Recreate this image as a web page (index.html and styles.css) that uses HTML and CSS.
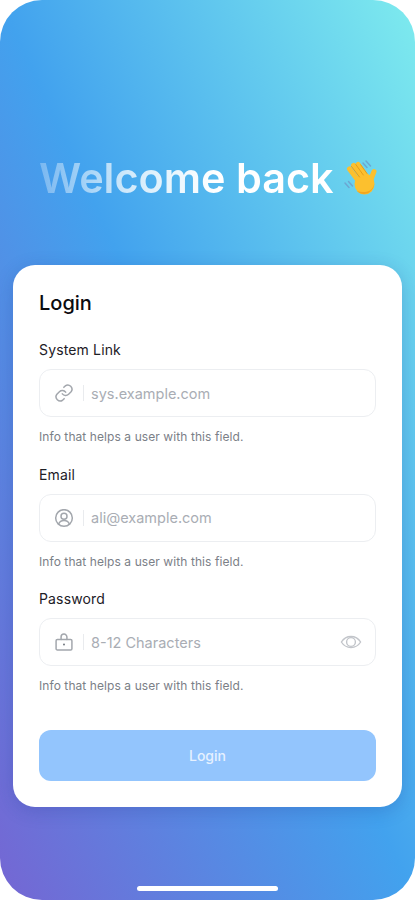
FILE: index.html
```html
<!doctype html>
<html lang="en">
    <head>
        <meta charset="UTF-8" />
        <meta name="viewport" content="width=device-width, initial-scale=1.0" />
        <title>Login</title>
        <link rel="stylesheet" href="styles.css">
    </head>
    <body>
        <div class="screen">
            <div class="welcome">
                <h1>Welcome back</h1>
                <!-- waving hand -->
                <svg class="wave" width="36" height="36" viewBox="0 0 36 36">
                    <g fill="none" stroke="#6d9ccb" stroke-width="1.500" stroke-linecap="round" opacity="0.8">
                        <path d="M20 3l4 4.500" />
                        <path d="M23 1l4.500 5" />
                        <path d="M2 23l4 4.500" />
                        <path d="M5.500 21.500l4 4.500" />
                    </g>
                    <g fill="none" stroke="#fcc02e" stroke-width="5" stroke-linecap="round">
                        <path d="M6.500 9l9 12" />
                        <path d="M10.500 5.500l9 12" />
                        <path d="M15 4.500l8.500 12" />
                        <path d="M31 11.500l-3.500 9" />
                    </g>
                    <ellipse cx="21.500" cy="24" rx="10" ry="10.500" fill="#fcc02e" />
                    <path fill="#f2a51f" d="M14 31c3 3 8 4 12 1.500 3-2 5-5 5.500-9-1 4-3.500 7-7 8-4 1-7.500 .5-10.500-.5z" />
                    <g fill="none" stroke="#dd9416" stroke-width=".8" stroke-linecap="round">
                        <path d="M8.500 6.500l8 10.500" />
                        <path d="M12.800 4.500l7.500 10.500" />
                        <path d="M17.700 4.800l6.300 8.700" />
                    </g>
                </svg>
            </div>

            <form class="card">
                <h2>Login</h2>

                <div class="field">
                    <label for="systemLink">System Link</label>
                    <div class="input-box">
                        <svg class="icon" width="20" height="20" viewBox="0 0 24 24">
                            <path d="M10 13a5 5 0 0 0 7.500.5l3-3a5 5 0 0 0-7-7l-1.700 1.700" />
                            <path d="M14 11a5 5 0 0 0-7.500-.5l-3 3a5 5 0 0 0 7 7l1.700-1.700" />
                        </svg>
                        <span class="divider"></span>
                        <input type="text" id="systemLink" placeholder="sys.example.com" />
                    </div>
                    <p class="help">Info that helps a user with this field.</p>
                </div>

                <div class="field">
                    <label for="email">Email</label>
                    <div class="input-box">
                        <svg class="icon" width="20" height="20" viewBox="0 0 24 24">
                            <circle cx="12" cy="12" r="10" />
                            <circle cx="12" cy="10" r="3.600" />
                            <path d="M5.500 19.500c1-3 3.500-4.500 6.500-4.500s5.500 1.500 6.500 4.500" />
                        </svg>
                        <span class="divider"></span>
                        <input type="text" id="email" placeholder="ali@example.com" />
                    </div>
                    <p class="help">Info that helps a user with this field.</p>
                </div>

                <div class="field">
                    <label for="password">Password</label>
                    <div class="input-box">
                        <svg class="icon" width="20" height="20" viewBox="0 0 24 24">
                            <rect x="2.500" y="9" width="19" height="12.500" rx="1.500" />
                            <path d="M8.500 9V6a3.500 3.500 0 0 1 7 0v3" />
                            <circle class="dot" cx="12" cy="15" r="1.300" />
                        </svg>
                        <span class="divider"></span>
                        <input type="password" id="password" placeholder="8-12 Characters" />
                        <svg class="icon eye" width="22" height="22" viewBox="0 0 24 24">
                            <path d="M1.500 12C4 8 7.500 6 12 6s8 2 10.500 6c-2.500 4-6 6-10.500 6s-8-2-10.500-6z" />
                            <circle cx="12" cy="12" r="4.800" />
                        </svg>
                    </div>
                    <p class="help">Info that helps a user with this field.</p>
                </div>

                <button type="button" class="login-btn">Login</button>
            </form>

            <div class="home-bar"></div>
        </div>
    </body>
</html>
```

FILE: styles.css
```css
* {
    box-sizing: border-box;
}
body {
    margin: 0;
    background-color: #fff;
    font-family: Inter, "Liberation Sans", sans-serif;
}
.screen {
    width: 415px;
    height: 900px;
    padding: 155px 13px 0;
    border-radius: 42px;
    overflow: hidden;
    background: linear-gradient(to top right, #7566d3 0%, #42a2ee 50%, #7eebee 100%);
}
.welcome {
    display: flex;
    align-items: center;
    gap: 9.5px;
    height: 46px;
    padding-left: 26px;
    margin-bottom: 64px;
}
.welcome h1 {
    margin: 0;
    font-size: 41.4px;
    line-height: 46px;
    font-weight: 600;
    white-space: nowrap;
    color: transparent;
    background: linear-gradient(to right, rgba(255, 255, 255, 0.28) 0%, rgba(255, 255, 255, 0.75) 30%, #fff 60%);
    -webkit-background-clip: text;
    background-clip: text;
}
.card {
    height: 542px;
    padding: 26px 26px 0;
    border-radius: 22px;
    background-color: #fff;
    box-shadow: 0 4px 18px rgba(30, 50, 140, 0.22);
}
.card h2 {
    margin: 0 0 25px;
    font-size: 20px;
    line-height: 24px;
    font-weight: 500;
    color: #0b0b0f;
}
.field {
    margin-bottom: 18.5px;
}
.field label {
    display: block;
    margin-bottom: 9px;
    font-size: 14px;
    line-height: 20px;
    font-weight: 400;
    letter-spacing: 0.15px;
    color: #1d2026;
}
.input-box {
    display: flex;
    align-items: center;
    height: 48px;
    padding: 0 13px 0 14px;
    border: 1px solid #eceef1;
    border-radius: 12px;
    background-color: #fff;
}
.input-box input {
    flex: 1;
    min-width: 0;
    border: none;
    outline: none;
    padding: 0;
    font-family: inherit;
    font-size: 14.5px;
    color: #333;
    background: none;
}
.input-box input::placeholder {
    color: #a9adb4;
    opacity: 1;
}
.icon {
    flex: none;
    fill: none;
    stroke: #a3a7ad;
    stroke-width: 1.800;
    stroke-linecap: round;
    stroke-linejoin: round;
}
.icon .dot {
    fill: #7d8289;
    stroke: none;
}
.eye {
    stroke: #c2c5ca;
    stroke-width: 1.500;
}
.divider {
    flex: none;
    width: 1px;
    height: 16px;
    margin: 0 7px 0 9px;
    background-color: #e9ebee;
}
.help {
    margin: 11px 0 0;
    font-size: 12px;
    line-height: 18px;
    letter-spacing: 0.08px;
    color: #7b8087;
}
.login-btn {
    display: block;
    width: 100%;
    height: 51px;
    margin-top: 35px;
    border: none;
    border-radius: 12px;
    font-family: inherit;
    font-size: 14px;
    font-weight: 500;
    color: #e6f1ff;
    background-color: #93c5fd;
    cursor: pointer;
}
.home-bar {
    width: 141px;
    height: 5px;
    margin: 79px auto 0;
    border-radius: 3px;
    background-color: #fff;
}
```
